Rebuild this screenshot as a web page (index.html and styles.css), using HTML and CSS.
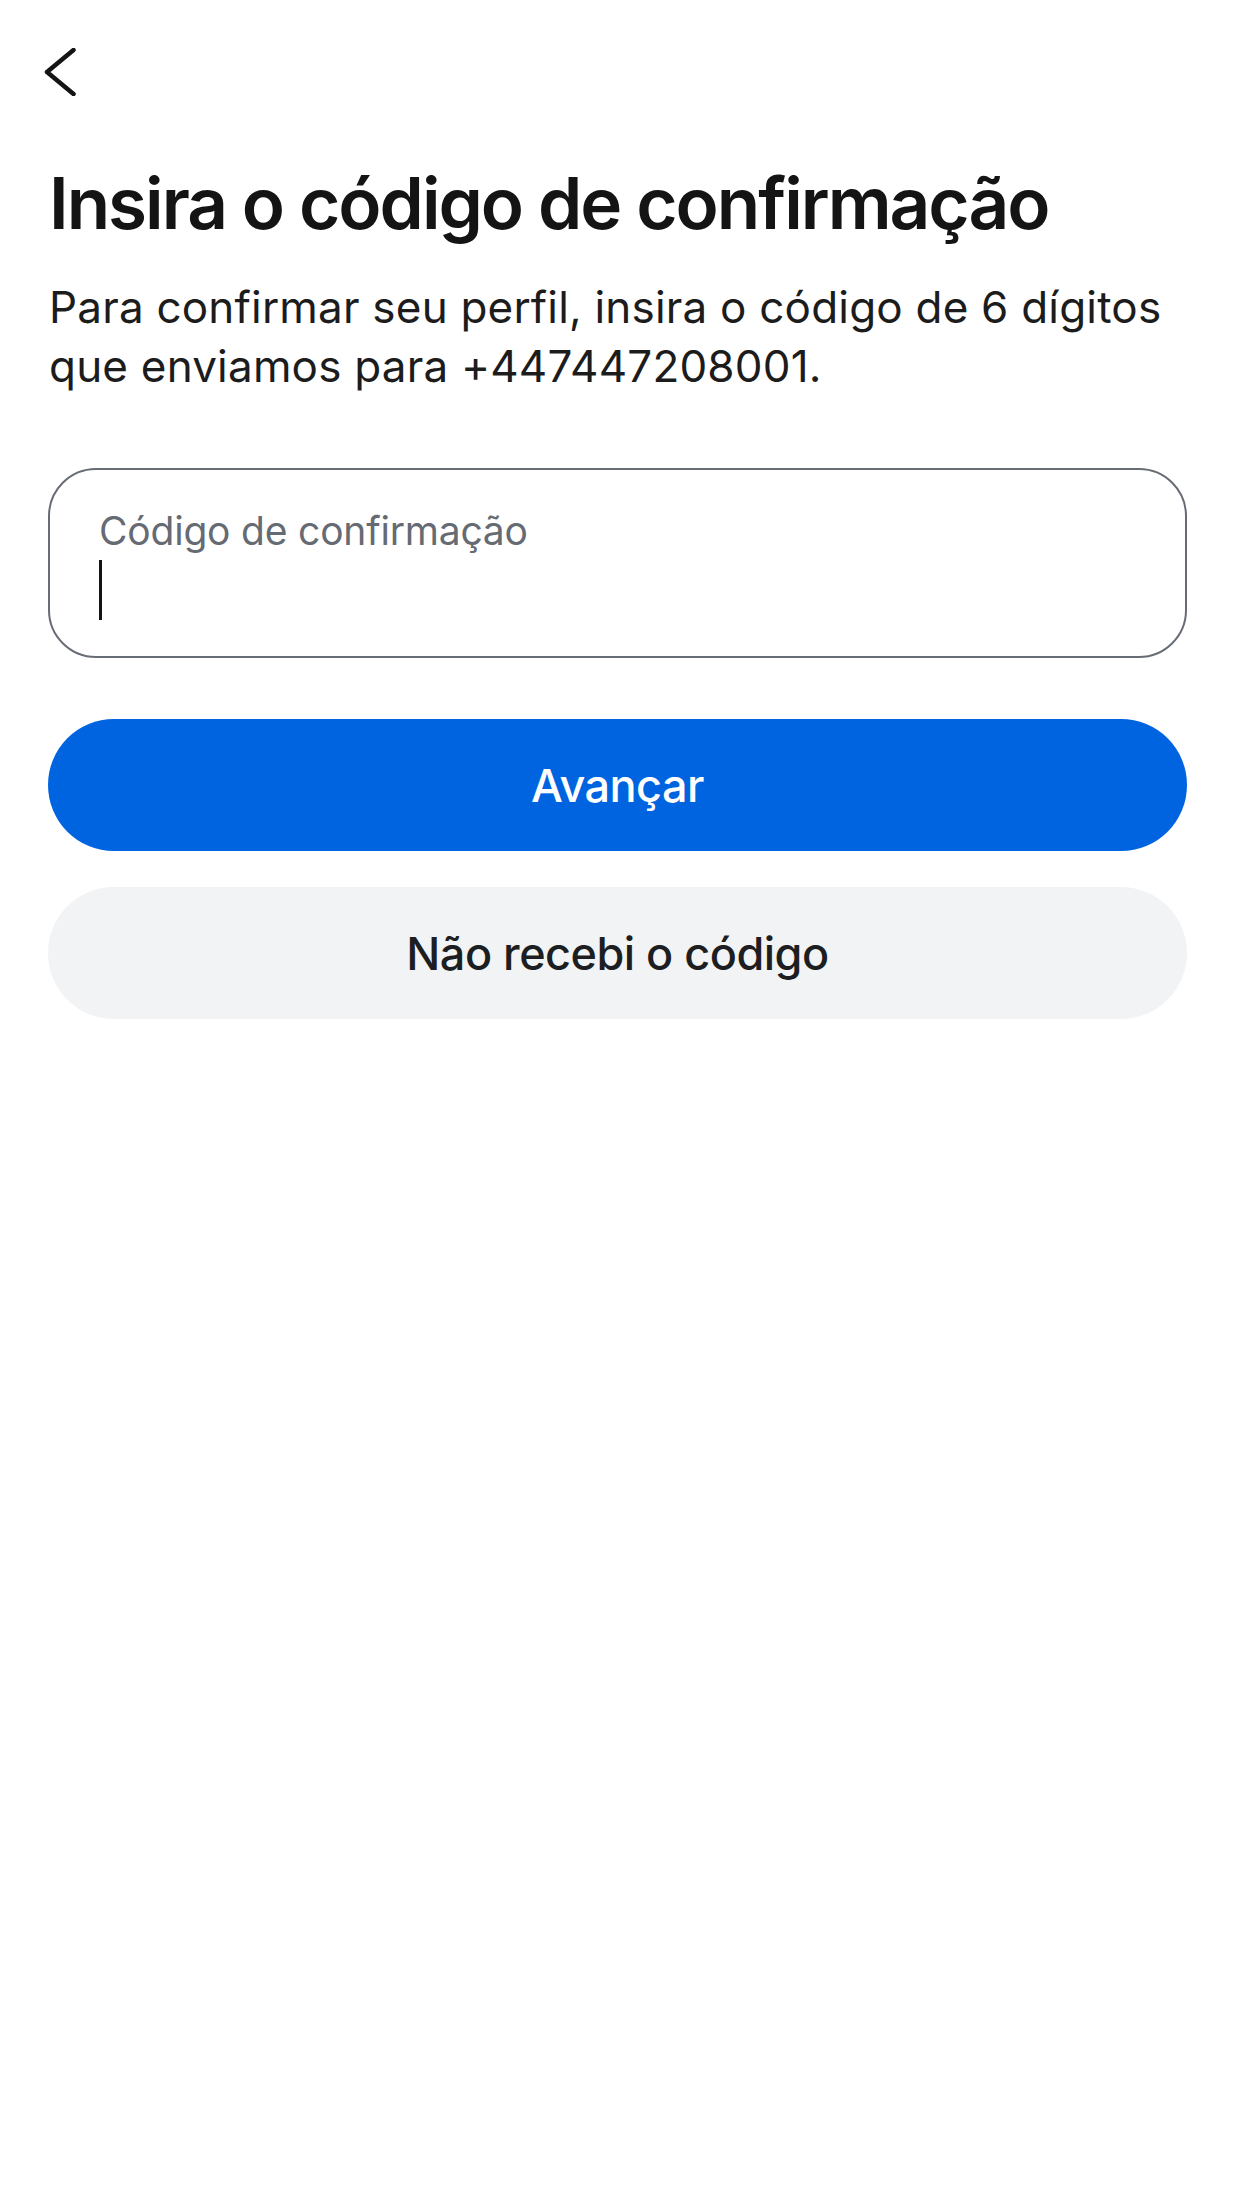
FILE: index.html
```html
<!DOCTYPE html>
<html lang="pt-BR">
<head>
    <meta charset="UTF-8">
    <meta name="viewport" content="width=device-width, initial-scale=1.0">
    <title>Insira o código de confirmação</title>
    <link rel="stylesheet" href="styles.css">
</head>
<body>
    <div class="screen">
        <div class="top-bar">
            <button class="back-button" aria-label="Voltar">
                <svg width="48" height="48" viewBox="0 0 48 48">
                    <path d="M37.5 2 L11 24 L37.5 46" fill="none" stroke="#141414" stroke-width="4.5" stroke-linecap="round" stroke-linejoin="round"/>
                </svg>
            </button>
        </div>

        <h1 class="title">Insira o código de confirmação</h1>
        <p class="subtitle">Para confirmar seu perfil, insira o código de 6 dígitos que enviamos para +447447208001.</p>

        <div class="code-field">
            <div class="code-label">Código de confirmação</div>
            <div class="code-input"><span class="caret"></span></div>
        </div>

        <div class="actions">
            <button class="btn btn-primary">Avançar</button>
            <button class="btn btn-secondary">Não recebi o código</button>
        </div>
    </div>
</body>
</html>
```

FILE: styles.css
```css
body {
    margin: 0;
    background-color: #fff;
    color: #141414;
    font-family: Inter, "Noto Sans", "Liberation Sans", sans-serif;
}
.screen {
    padding: 0 49px 0 48px;
}
.top-bar {
    display: flex;
    align-items: center;
    padding-top: 48px;
    height: 48px;
}
.back-button {
    display: flex;
    margin-left: -12px;
    padding: 0;
    border: none;
    background: none;
    cursor: pointer;
}
.title {
    margin: 64px 0 0 1px;
    font-size: 71px;
    line-height: 86px;
    font-weight: 600;
    letter-spacing: -2px;
}
.subtitle {
    margin: 32px 0 0 1px;
    font-size: 44px;
    line-height: 59px;
    letter-spacing: 0.2px;
    color: #1c1c1c;
}
.code-field {
    margin-top: 72px;
    height: 149px;
    padding: 37px 0 0 49px;
    border: 2px solid #676c75;
    border-radius: 48px;
}
.code-label {
    font-size: 39px;
    line-height: 48px;
    letter-spacing: -0.2px;
    color: #656a73;
}
.code-input {
    height: 64px;
    padding-top: 5px;
}
.caret {
    display: block;
    width: 3px;
    height: 60px;
    background-color: #141414;
}
.actions {
    display: flex;
    flex-direction: column;
    gap: 36px;
    margin-top: 61px;
}
.btn {
    height: 132px;
    border: none;
    border-radius: 66px;
    font-family: inherit;
    font-size: 45px;
    font-weight: 500;
    letter-spacing: -0.5px;
    cursor: pointer;
}
.btn-primary {
    background-color: #0064e0;
    color: #fff;
}
.btn-secondary {
    background-color: #f2f3f5;
    color: #1c1e21;
}
```
